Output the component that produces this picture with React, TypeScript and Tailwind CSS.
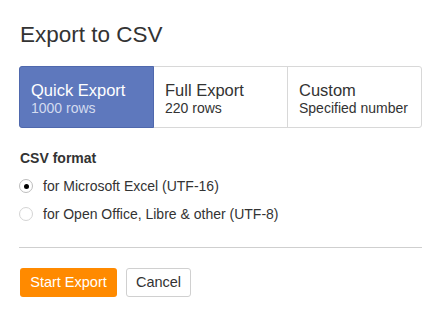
const font = { fontFamily: '"Liberation Sans", Arial, sans-serif' };

const tabs = [
  { title: 'Quick Export', sub: '1000 rows' },
  { title: 'Full Export', sub: '220 rows' },
  { title: 'Custom', sub: 'Specified number' },
];

export default function App() {
  const active = 0;
  return (
    <div className="w-[441px] h-[314px] bg-white px-[19px] pt-[21px] text-[#333]" style={font}>
      <h1 className="text-[22.5px] leading-[27px] ml-px">Export to CSV</h1>

      <div className="mt-[18px] flex h-[62px] border border-[#d8d8d8] rounded-[3px] w-[403px]">
        {tabs.map((t, i) => (
          <div
            key={t.title}
            className={`flex-1 flex flex-col justify-center pl-[11px] pt-[2px] ${
              i === active
                ? 'bg-[#5e78bd] text-white rounded-l-[3px] -m-px mr-0 border border-[#4f68ad]'
                : 'text-[#333]'
            } ${i === 2 ? 'border-l border-[#d8d8d8]' : ''}`}
          >
            <div className="text-[16.5px] leading-[19px]">{t.title}</div>
            <div className={`text-[14px] leading-[16px] ${i === active ? 'text-[#d3dbef]' : ''}`}>
              {t.sub}
            </div>
          </div>
        ))}
      </div>

      <div className="mt-[22px] text-[14px] font-bold ml-px leading-[17px]">CSV format</div>

      <div className="mt-[11px] flex flex-col gap-[12px] text-[14px]">
        <label className="flex items-center gap-[10px] h-[16px]">
          <span className="w-[14px] h-[14px] rounded-full border border-[#bdbdbd] flex items-center justify-center">
            <span className="w-[5px] h-[5px] rounded-full bg-black" />
          </span>
          for Microsoft Excel (UTF-16)
        </label>
        <label className="flex items-center gap-[10px] h-[16px]">
          <span className="w-[14px] h-[14px] rounded-full border border-[#d4d4d4]" />
          for Open Office, Libre &amp; other (UTF-8)
        </label>
      </div>

      <div className="mt-[25px] border-t border-[#cfcfcf] w-[403px]" />

      <div className="mt-[20px] flex gap-[9px] ml-px">
        <button className="h-[29px] w-[97px] bg-[#ff8a00] text-white text-[14.5px] rounded-[3px]">
          Start Export
        </button>
        <button className="h-[29px] w-[65px] bg-white border border-[#d0d0d0] text-[#333] text-[14.5px] rounded-[3px]">
          Cancel
        </button>
      </div>
    </div>
  );
}
